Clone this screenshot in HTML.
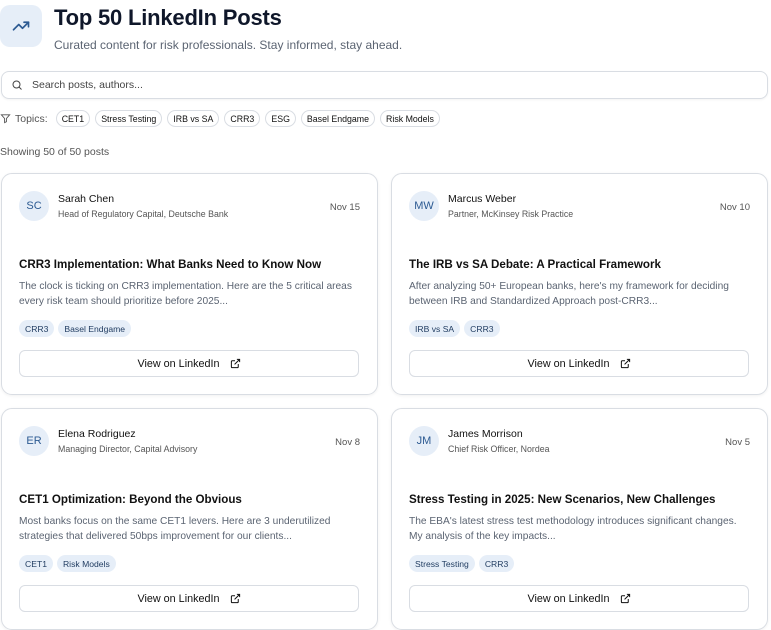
<!DOCTYPE html>
<html><head><meta charset="utf-8"><style>
*{box-sizing:border-box;margin:0;padding:0}
body{width:771px;height:628px;overflow:hidden;background:#fff;font-family:"Liberation Sans",sans-serif;color:#0f172a;position:relative}
.abs{position:absolute}
.logo{left:0;top:5px;width:42px;height:42px;border-radius:10px;background:#e6eef8;display:flex;align-items:center;justify-content:center}
h1{position:absolute;left:54px;top:5px;font-size:22px;font-weight:bold;letter-spacing:-0.2px}
.sub{left:54px;top:38px;font-size:12px;color:#5b6472}
.search{left:1px;top:71px;width:767px;height:28px;border:1px solid #d9dde3;border-radius:8px;box-shadow:0 1px 2px rgba(0,0,0,.05)}
.search span{position:absolute;left:30px;top:7px;font-size:10.5px;color:#444}
.topics{left:0;top:110px;display:flex;align-items:center;font-size:10.5px;color:#555}
.chip{border:1px solid #d9dde3;border-radius:9px;height:17px;padding:0 5px;font-size:8.8px;color:#111;display:flex;align-items:center;margin-left:5px}
.show{left:0;top:146px;font-size:10.5px;color:#555}
.card{position:absolute;width:377px;height:222px;border:1px solid #d9dde3;border-radius:11px;box-shadow:0 1px 3px rgba(0,0,0,.06)}
.av{position:absolute;left:17px;top:17px;width:30px;height:30px;border-radius:50%;background:#e6eef8;color:#2c5a92;font-size:11px;display:flex;align-items:center;justify-content:center}
.nm{position:absolute;left:56px;top:19px;font-size:10.5px;color:#111}
.rl{position:absolute;left:56px;top:35px;font-size:8.8px;color:#555}
.dt{position:absolute;right:17px;top:28px;font-size:9.5px;color:#555}
.tt{position:absolute;left:17px;top:84px;font-size:11.6px;font-weight:bold;color:#111}
.ds{position:absolute;left:17px;top:105px;width:343px;font-size:10.2px;line-height:15px;color:#5b6472}
.tags{position:absolute;left:17px;top:146px;display:flex;gap:4px}
.tag{background:#e6eef8;color:#1e3a5f;border-radius:9px;height:17px;padding:0 6px;font-size:8.6px;display:flex;align-items:center}
.btn{position:absolute;left:17px;top:176px;width:340px;height:27px;border:1px solid #d9dde3;border-radius:6px;display:flex;align-items:center;justify-content:center;font-size:10.8px;color:#111;gap:10px}
</style></head><body>
<div class="abs logo"><svg width="18" height="18" viewBox="0 0 24 24" fill="none" stroke="#2c5a92" stroke-width="2.2" stroke-linecap="round" stroke-linejoin="round"><path d="M2 17l7-7 5 5 8-8"/><path d="M16 7h6v6"/></svg></div>
<h1>Top 50 LinkedIn Posts</h1>
<div class="abs sub">Curated content for risk professionals. Stay informed, stay ahead.</div>
<div class="abs search"><svg class="abs" style="left:9px;top:7px" width="12" height="12" viewBox="0 0 24 24" fill="none" stroke="#444" stroke-width="2"><circle cx="11" cy="11" r="7"/><path d="M21 21l-5-5"/></svg><span>Search posts, authors...</span></div>
<div class="abs topics"><svg width="11" height="11" viewBox="0 0 24 24" fill="none" stroke="#555" stroke-width="2"><path d="M3 4h18l-7 8v7l-4 2v-9z"/></svg><span style="margin-left:4px;margin-right:3px">Topics:</span>
<div class="chip">CET1</div><div class="chip">Stress Testing</div><div class="chip">IRB vs SA</div><div class="chip">CRR3</div><div class="chip">ESG</div><div class="chip">Basel Endgame</div><div class="chip">Risk Models</div></div>
<div class="abs show">Showing 50 of 50 posts</div>

<div class="card" style="left:1px;top:173px"><div class="av">SC</div><div class="nm">Sarah Chen</div><div class="rl">Head of Regulatory Capital, Deutsche Bank</div><div class="dt">Nov 15</div>
<div class="tt">CRR3 Implementation: What Banks Need to Know Now</div><div class="ds">The clock is ticking on CRR3 implementation. Here are the 5 critical areas every risk team should prioritize before 2025...</div>
<div class="tags"><div class="tag">CRR3</div><div class="tag">Basel Endgame</div></div>
<div class="btn">View on LinkedIn <svg width="11" height="11" viewBox="0 0 24 24" fill="none" stroke="#111" stroke-width="2.2"><path d="M18 13v6a2 2 0 0 1-2 2H5a2 2 0 0 1-2-2V8a2 2 0 0 1 2-2h6M15 3h6v6M10 14L21 3"/></svg></div></div>

<div class="card" style="left:391px;top:173px"><div class="av">MW</div><div class="nm">Marcus Weber</div><div class="rl">Partner, McKinsey Risk Practice</div><div class="dt">Nov 10</div>
<div class="tt">The IRB vs SA Debate: A Practical Framework</div><div class="ds">After analyzing 50+ European banks, here's my framework for deciding between IRB and Standardized Approach post-CRR3...</div>
<div class="tags"><div class="tag">IRB vs SA</div><div class="tag">CRR3</div></div>
<div class="btn">View on LinkedIn <svg width="11" height="11" viewBox="0 0 24 24" fill="none" stroke="#111" stroke-width="2.2"><path d="M18 13v6a2 2 0 0 1-2 2H5a2 2 0 0 1-2-2V8a2 2 0 0 1 2-2h6M15 3h6v6M10 14L21 3"/></svg></div></div>

<div class="card" style="left:1px;top:408px"><div class="av">ER</div><div class="nm">Elena Rodriguez</div><div class="rl">Managing Director, Capital Advisory</div><div class="dt">Nov 8</div>
<div class="tt">CET1 Optimization: Beyond the Obvious</div><div class="ds">Most banks focus on the same CET1 levers. Here are 3 underutilized strategies that delivered 50bps improvement for our clients...</div>
<div class="tags"><div class="tag">CET1</div><div class="tag">Risk Models</div></div>
<div class="btn">View on LinkedIn <svg width="11" height="11" viewBox="0 0 24 24" fill="none" stroke="#111" stroke-width="2.2"><path d="M18 13v6a2 2 0 0 1-2 2H5a2 2 0 0 1-2-2V8a2 2 0 0 1 2-2h6M15 3h6v6M10 14L21 3"/></svg></div></div>

<div class="card" style="left:391px;top:408px"><div class="av">JM</div><div class="nm">James Morrison</div><div class="rl">Chief Risk Officer, Nordea</div><div class="dt">Nov 5</div>
<div class="tt">Stress Testing in 2025: New Scenarios, New Challenges</div><div class="ds">The EBA's latest stress test methodology introduces significant changes.<br>My analysis of the key impacts...</div>
<div class="tags"><div class="tag">Stress Testing</div><div class="tag">CRR3</div></div>
<div class="btn">View on LinkedIn <svg width="11" height="11" viewBox="0 0 24 24" fill="none" stroke="#111" stroke-width="2.2"><path d="M18 13v6a2 2 0 0 1-2 2H5a2 2 0 0 1-2-2V8a2 2 0 0 1 2-2h6M15 3h6v6M10 14L21 3"/></svg></div></div>
</body></html>
